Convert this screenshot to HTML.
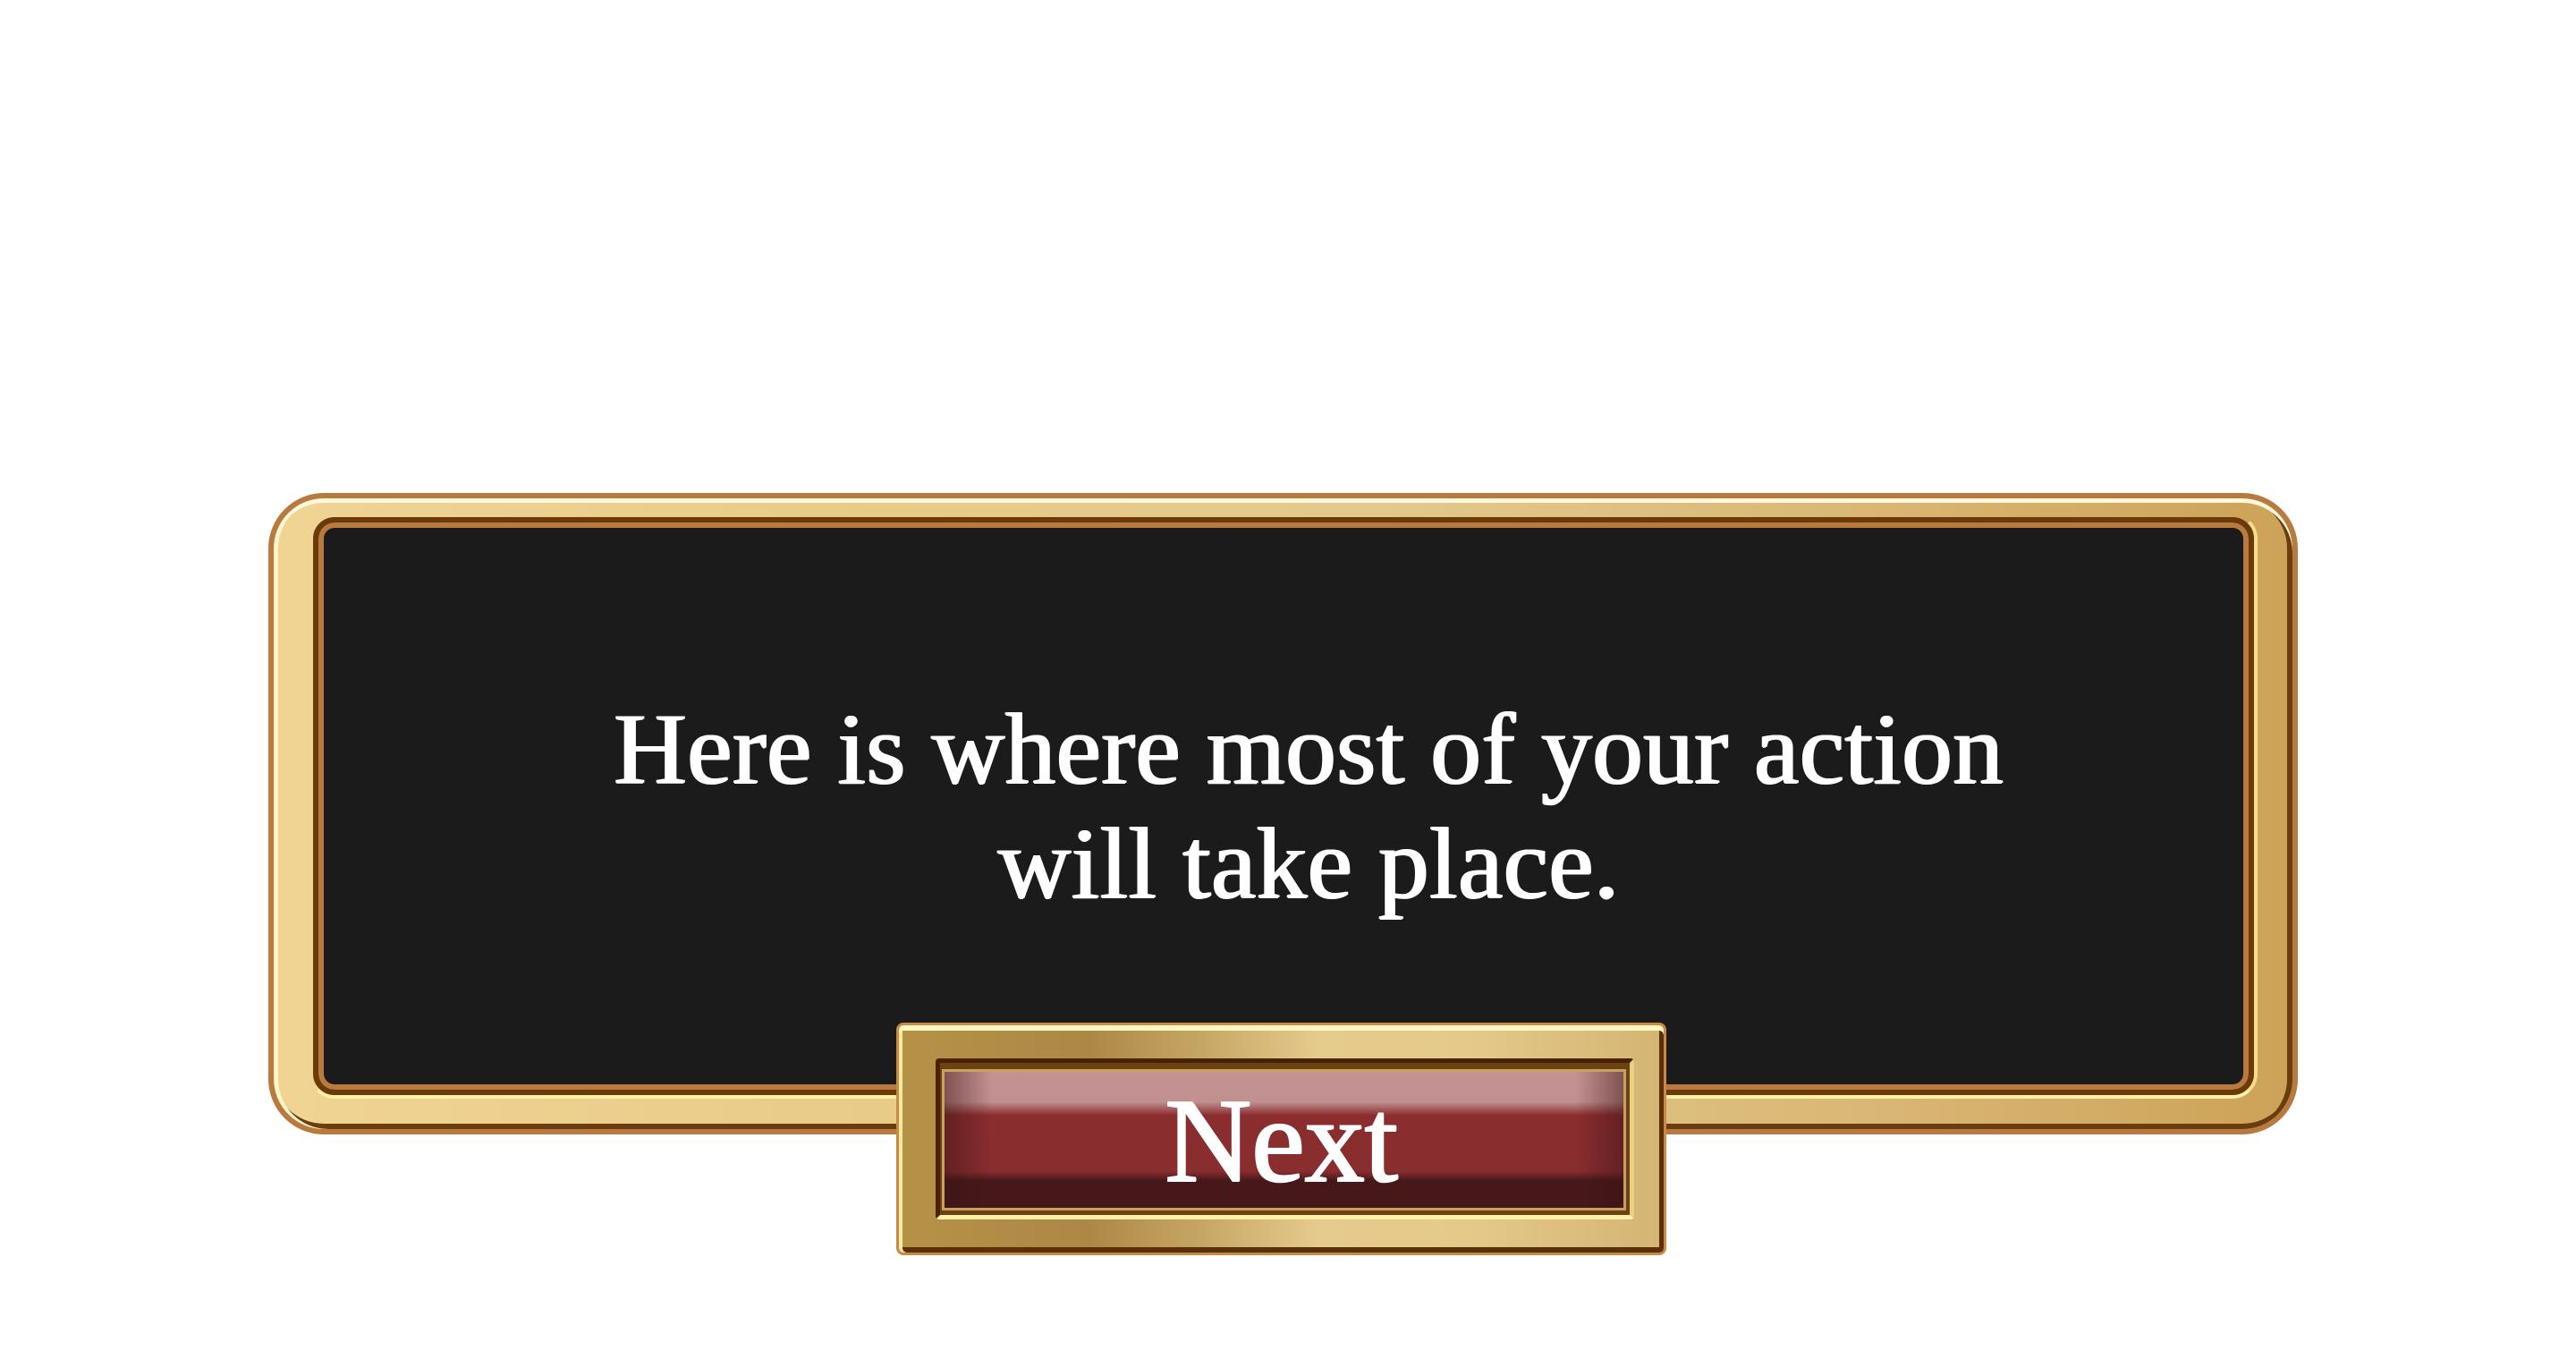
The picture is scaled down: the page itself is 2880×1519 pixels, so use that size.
<!DOCTYPE html>
<html><head><meta charset="utf-8"><style>
html,body{margin:0;padding:0;background:#fff;width:2880px;height:1519px;overflow:hidden;position:relative}
div{position:absolute;box-sizing:border-box}
.outer{left:300px;top:551px;width:2269px;height:717px;border-radius:62px;
 background:linear-gradient(90deg,#f0d494 0%,#e9cb88 30%,#e4c98c 55%,#d9b673 80%,#cda258 100%);
 border:6px solid #b97a40;box-shadow:inset 0 5px 0 #fff8dc, inset 5px 0 0 #fff4c8, inset 0 -6px 0 #6a3d10, inset -6px 0 0 #6a3d10}
.inner{left:350px;top:578px;width:2170px;height:646px;border-radius:24px;background:#1b1b1b;
 border:6px solid #6a3a08;box-shadow:inset 0 0 0 6px #b97a40;}
.innerhl{left:346px;top:574px;width:2178px;height:654px;border-radius:28px;border:4px solid transparent;border-bottom-color:#fff1a8;border-right-color:#f6de8a}
.txt{left:0;width:2926px;text-align:center;color:#fff;font-family:"Liberation Serif",serif;font-size:113px;line-height:1;white-space:nowrap;letter-spacing:0.5px;
 text-shadow:1.5px 0 0 #fff,-1px 0 0 #fff,0 1px 0 #fff}
.bf{left:1002px;top:1143px;width:861px;height:260px;border-radius:8px;
 background:linear-gradient(90deg,#b59148 0%,#ad8845 25%,#c7a765 40%,#e6cb8e 55%,#e4c98a 75%,#d4b473 100%);
 border:3px solid #c98a45;box-shadow:inset 0 6px 0 #fff6c0, inset 4px 0 0 #ffe9a0, inset 0 -6px 0 #5a3008, inset -5px 0 0 #5a3008}
.bi{left:1046px;top:1183px;width:781px;height:180px;border-radius:4px;background:#6b4312;
 border:5px solid #4a2200;border-bottom-color:#fff2a8;border-right-color:#e9cf80}
.red{left:1053px;top:1195px;width:765px;height:158px;
 background:linear-gradient(180deg,#c39393 0%,#c19090 22%,#8b2d2f 32%,#8a2d2f 73%,#46181a 80%,#46181a 100%);
 border:3px solid #c9a060}
.redsh{left:1056px;top:1198px;width:759px;height:152px;
 background:linear-gradient(90deg,rgba(60,20,20,.5) 0%,rgba(0,0,0,0) 7%,rgba(0,0,0,0) 93%,rgba(60,20,20,.5) 100%)}
.next{left:1002px;width:861px;top:1208px;text-align:center;color:#fff;font-family:"Liberation Serif",serif;font-size:134px;line-height:1;
 -webkit-text-stroke:2px #fff;text-shadow:1.5px 0 0 #fff}
</style></head><body>
<div class="outer"></div>
<div class="innerhl"></div>
<div class="inner"></div>
<div class="txt" style="top:781px">Here is where most of your action</div>
<div class="txt" style="top:909px">will take place.</div>
<div class="bf"></div>
<div class="bi"></div>
<div class="red"></div>
<div class="redsh"></div>
<div class="next">Next</div>
</body></html>
